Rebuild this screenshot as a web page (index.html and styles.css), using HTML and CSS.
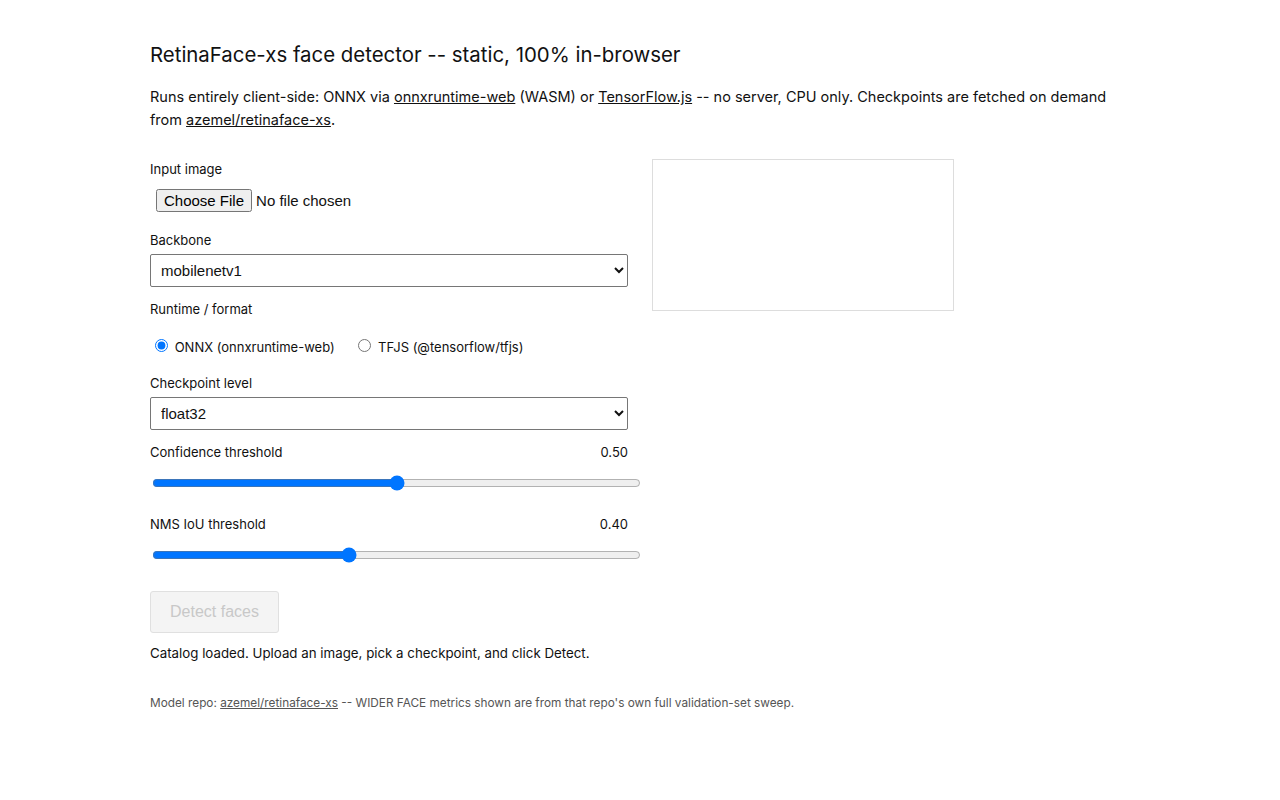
FILE: index.html
```html
<!DOCTYPE html>
<html lang="en">
<head>
  <meta charset="utf-8"/>
  <meta name="viewport" content="width=device-width, initial-scale=1" />
  <title>RetinaFace-xs face detector</title>
  <link rel="stylesheet" href="styles.css">
</head>
<body>
<main class="page">
  <h1 class="title">RetinaFace-xs face detector -- static, 100% in-browser</h1>
  <p class="intro">Runs entirely client-side: ONNX via <a href="#">onnxruntime-web</a> (WASM) or <a href="#">TensorFlow.js</a> -- no server, CPU only. Checkpoints are fetched on demand from <a href="#">azemel/retinaface-xs</a>.</p>

  <div class="layout">
    <!-- controls -->
    <form class="controls">
      <div class="field">
        <label class="field-label" for="file">Input image</label>
        <input class="file-input" id="file" type="file" accept="image/*">
      </div>

      <div class="field">
        <label class="field-label" for="backbone">Backbone</label>
        <select class="select" id="backbone">
          <option>mobilenetv1</option>
        </select>
      </div>

      <div class="field">
        <span class="field-label">Runtime / format</span>
        <div class="radios">
          <label class="radio"><input type="radio" name="rt" checked> ONNX (onnxruntime-web)</label>
          <label class="radio"><input type="radio" name="rt"> TFJS (@tensorflow/tfjs)</label>
        </div>
      </div>

      <div class="field">
        <label class="field-label" for="level">Checkpoint level</label>
        <select class="select" id="level">
          <option>float32</option>
        </select>
      </div>

      <div class="field field-range">
        <div class="range-head"><label for="conf">Confidence threshold</label><span>0.50</span></div>
        <input class="range" id="conf" type="range" min="0" max="1" step="0.01" value="0.5">
      </div>

      <div class="field field-range">
        <div class="range-head"><label for="nms">NMS IoU threshold</label><span>0.40</span></div>
        <input class="range" id="nms" type="range" min="0" max="1" step="0.01" value="0.4">
      </div>

      <button class="detect" type="button" disabled>Detect faces</button>
      <p class="status">Catalog loaded. Upload an image, pick a checkpoint, and click Detect.</p>
    </form>

    <!-- output -->
    <div class="output">
      <canvas class="preview"></canvas>
    </div>
  </div>

  <footer class="note">Model repo: <a href="#">azemel/retinaface-xs</a> -- WIDER FACE metrics shown are from that repo's own full validation-set sweep.</footer>
</main>
</body>
</html>
```

FILE: styles.css
```css
/* page */
body {
  margin: 0;
  background: #fff;
  color: #111;
  font-family: Inter, "Liberation Sans", Arial, sans-serif;
}

.page {
  max-width: 980px;
  margin: 0 auto;
  padding: 40px 0;
}

.title {
  font-size: 20.4px;
  font-weight: 400;
  margin: 0 0 15px;
  line-height: 30px;
}

.intro {
  font-size: 14.5px;
  line-height: 23px;
  margin: 0 0 28px;
}

a {
  color: inherit;
}

/* two columns: form and canvas */
.layout {
  display: flex;
  gap: 24px;
  align-items: flex-start;
}

.controls {
  width: 478px;
  margin: 0;
}

.field {
  margin-bottom: 12px;
}

.field-label,
.range-head {
  display: block;
  font-size: 13px;
  line-height: 20px;
  margin-bottom: 4px;
}

.file-input {
  font-family: "Liberation Sans", Arial, sans-serif;
  font-size: 15px;
  padding: 6px;
  margin: 0;
}

.select {
  display: block;
  width: 100%;
  height: 33px;
  font-family: "Liberation Sans", Arial, sans-serif;
  font-size: 15px;
  padding: 0 6px;
  border: 1px solid #767676;
  border-radius: 2px;
  background: #fff;
  color: #111;
}

.radios {
  font-size: 13px;
  padding: 13px 0 6px;
}

.radio {
  margin-right: 15px;
}

.range-head {
  display: flex;
  justify-content: space-between;
}

.range {
  width: 489px;
  margin: 9px 2px 6px;
  accent-color: #0075ff;
}

.field-range {
  margin-bottom: 17px;
}

.detect {
  margin-top: 5px;
  font-family: "Liberation Sans", Arial, sans-serif;
  font-size: 16px;
  padding: 11px 19px;
  background: #f4f4f4;
  color: #c8c8c8;
  border: 1px solid #e0e0e0;
  border-radius: 3px;
}

.status {
  font-size: 13.3px;
  margin: 12px 0 0;
}

.output {
  flex: none;
}

.preview {
  display: block;
  width: 300px;
  height: 150px;
  border: 1px solid #ddd;
}

.note {
  margin-top: 35px;
  font-size: 11.8px;
  color: #555;
}
```
